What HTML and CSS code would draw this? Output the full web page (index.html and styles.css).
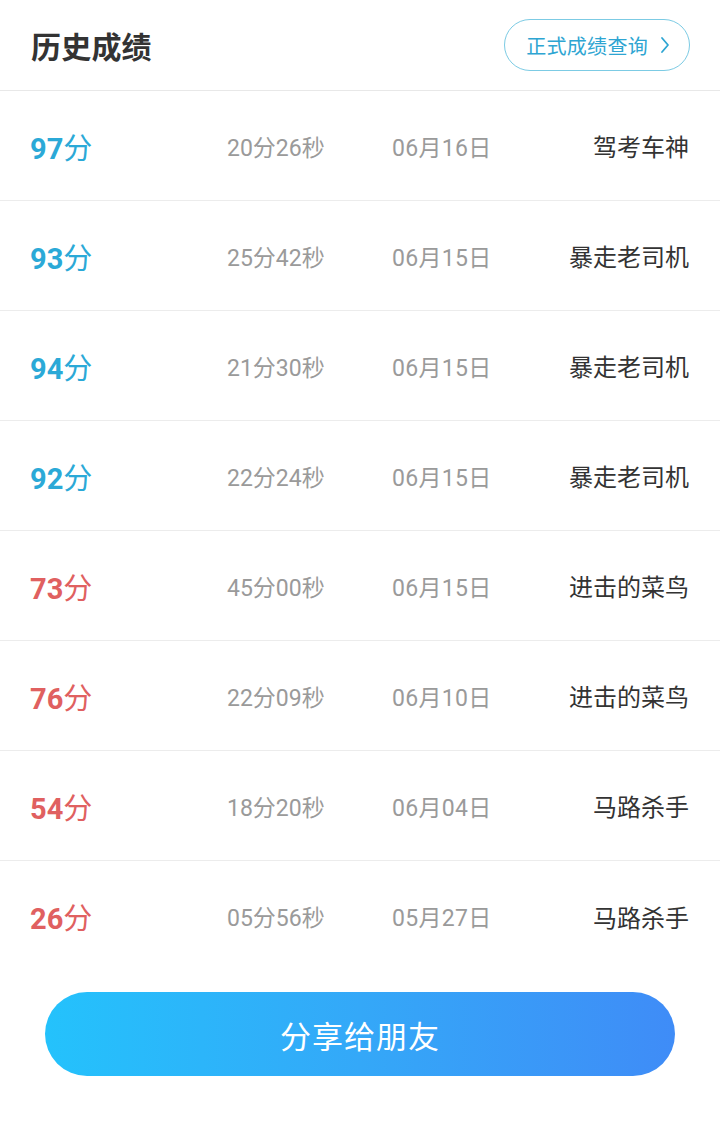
FILE: index.html
```html
<!DOCTYPE html>
<html lang="zh-CN">
<head>
<meta charset="utf-8">
<title>历史成绩</title>
<link rel="stylesheet" href="styles.css">
</head>
<body>
<div class="page">
  <header class="header">
    <h1 class="title">历史成绩</h1>
    <a class="query-btn">正式成绩查询<svg class="chev" viewBox="0 0 10 18" width="10" height="18"><path d="M2 2 L8 9 L2 16" fill="none" stroke="currentColor" stroke-width="1.8" stroke-linecap="round" stroke-linejoin="round"/></svg></a>
  </header>
  <ul class="list">
    <li class="row"><span class="score pass"><b>97</b>分</span><span class="time">20分26秒</span><span class="date">06月16日</span><span class="name">驾考车神</span></li>
    <li class="row"><span class="score pass"><b>93</b>分</span><span class="time">25分42秒</span><span class="date">06月15日</span><span class="name">暴走老司机</span></li>
    <li class="row"><span class="score pass"><b>94</b>分</span><span class="time">21分30秒</span><span class="date">06月15日</span><span class="name">暴走老司机</span></li>
    <li class="row"><span class="score pass"><b>92</b>分</span><span class="time">22分24秒</span><span class="date">06月15日</span><span class="name">暴走老司机</span></li>
    <li class="row"><span class="score fail"><b>73</b>分</span><span class="time">45分00秒</span><span class="date">06月15日</span><span class="name">进击的菜鸟</span></li>
    <li class="row"><span class="score fail"><b>76</b>分</span><span class="time">22分09秒</span><span class="date">06月10日</span><span class="name">进击的菜鸟</span></li>
    <li class="row"><span class="score fail"><b>54</b>分</span><span class="time">18分20秒</span><span class="date">06月04日</span><span class="name">马路杀手</span></li>
    <li class="row last"><span class="score fail"><b>26</b>分</span><span class="time">05分56秒</span><span class="date">05月27日</span><span class="name">马路杀手</span></li>
  </ul>
  <div class="footer">
    <button class="share">分享给朋友</button>
  </div>
</div>
</body>
</html>
```

FILE: styles.css
```css
html, body {
  margin: 0;
  padding: 0;
  background: #ffffff;
}
body {
  font-family: Roboto, "Noto Sans CJK SC", sans-serif;
  color: #333333;
}
.page {
  width: 720px;
}
.header {
  height: 91px;
  display: flex;
  align-items: center;
  justify-content: space-between;
  padding: 0 30px 0 31px;
  box-sizing: border-box;
  border-bottom: 1px solid #e8e8e8;
}
.title {
  margin: 0;
  font-size: 30px;
  font-weight: 700;
  color: #333333;
  letter-spacing: 0.2px;
}
.query-btn {
  display: flex;
  align-items: center;
  gap: 12px;
  height: 52px;
  box-sizing: border-box;
  padding: 0 19px 0 21px;
  border: 1px solid #7ccbe4;
  border-radius: 26px;
  color: #2ea5d2;
  font-size: 20px;
  letter-spacing: 0.3px;
}
.chev {
  display: block;
  color: #2ea5d2;
}
.list {
  list-style: none;
  margin: 0;
  padding: 0;
}
.row {
  height: 110px;
  box-sizing: border-box;
  border-bottom: 1px solid #ececec;
  display: grid;
  grid-template-columns: 197px 165px 1fr auto;
  align-items: center;
  padding: 0 31px 0 30px;
}
.row.last {
  border-bottom: none;
}
.score {
  font-size: 29px;
  font-weight: 400;
  letter-spacing: 0.5px;
}
.score b {
  font-weight: 700;
  letter-spacing: 0;
}
.score.pass { color: #2ba9d7; }
.score.fail { color: #e06060; }
.time, .date {
  font-size: 23px;
  color: #9a9a9a;
}
.date {
  letter-spacing: 0.3px;
}
.name {
  font-size: 24px;
  color: #333333;
  text-align: right;
}
.footer {
  padding: 21px 45px 0 45px;
}
.share {
  display: block;
  width: 630px;
  height: 84px;
  border: none;
  border-radius: 42px;
  background: linear-gradient(90deg, #24c2fc 0%, #34a8f8 50%, #3f8cf7 100%);
  color: #ffffff;
  font-family: Roboto, "Noto Sans CJK SC", sans-serif;
  font-size: 31px;
  letter-spacing: 1px;
  padding: 0;
}
```
